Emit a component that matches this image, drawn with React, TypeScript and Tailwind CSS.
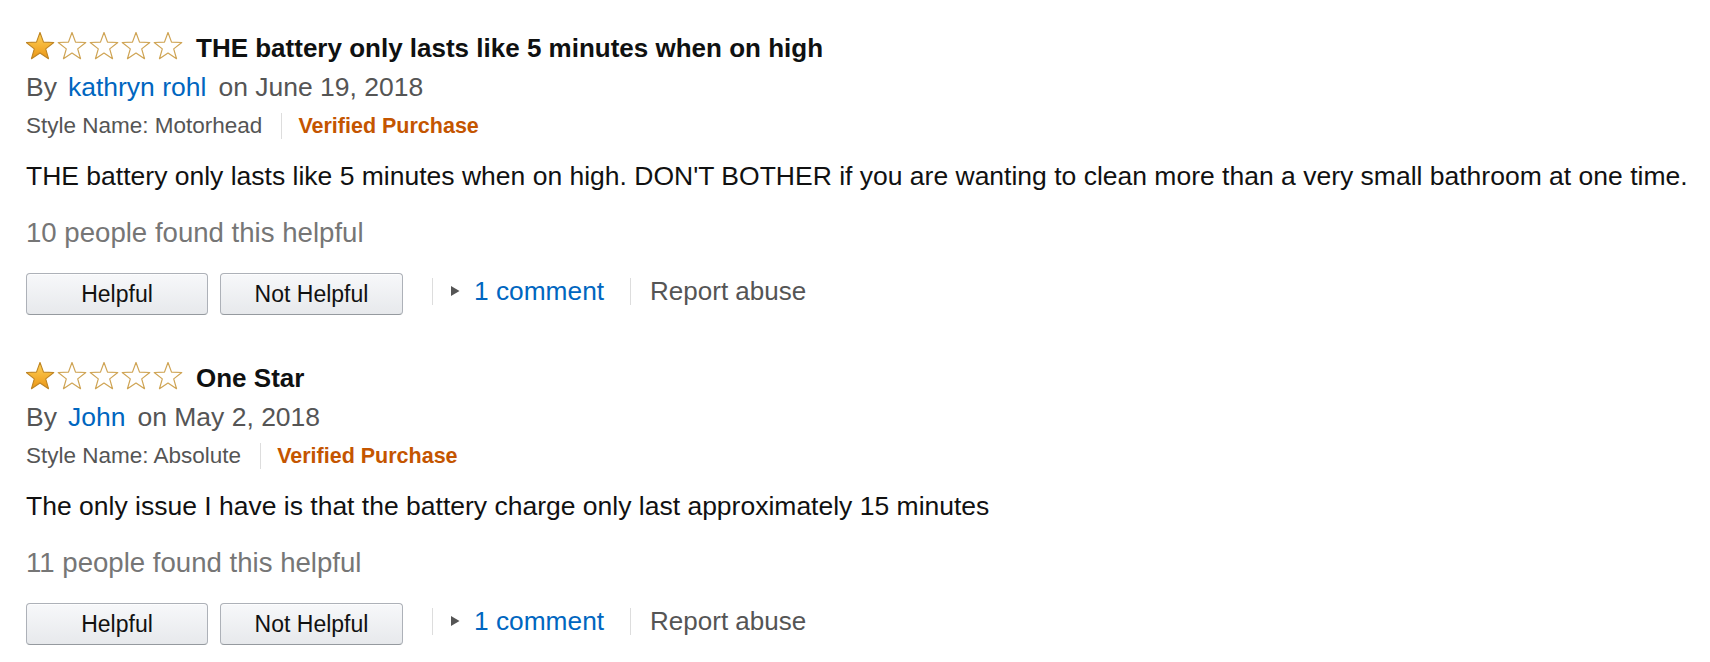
import React from "react";

const R = 14.5;
const r = 6.0;
function starPoints(): string {
  const pts: string[] = [];
  for (let k = 0; k < 10; k++) {
    const ang = ((-90 + k * 36) * Math.PI) / 180;
    const rad = k % 2 === 0 ? R : r;
    pts.push(`${(rad * Math.cos(ang)).toFixed(3)},${(rad * Math.sin(ang)).toFixed(3)}`);
  }
  return pts.join(" ");
}
const STAR = starPoints();

function Stars({ filled }: { filled: number }) {
  return (
    <svg width="158" height="28" viewBox="0 0 158 28" className="shrink-0 self-start">
      <defs>
        <linearGradient id="starfill" x1="0" y1="0" x2="0" y2="1">
          <stop offset="0%" stopColor="#ffd35a" />
          <stop offset="100%" stopColor="#eb9615" />
        </linearGradient>
      </defs>
      {[0, 1, 2, 3, 4].map((i) => (
        <g key={i} transform={`translate(${14 + i * 32},15)`}>
          <polygon
            points={STAR}
            fill={i < filled ? "url(#starfill)" : "#ffffff"}
            stroke={i < filled ? "#bf8523" : "#cfa454"}
            strokeWidth={i < filled ? 1.1 : 1.2}
            strokeLinejoin="round"
          />
        </g>
      ))}
    </svg>
  );
}

type Review = {
  title: string;
  author: string;
  date: string;
  style: string;
  body: string;
  helpful: string;
};

const reviews: Review[] = [
  {
    title: "THE battery only lasts like 5 minutes when on high",
    author: "kathryn rohl",
    date: "on June 19, 2018",
    style: "Style Name: Motorhead",
    body:
      "THE battery only lasts like 5 minutes when on high. DON'T BOTHER if you are wanting to clean more than a very small bathroom at one time.",
    helpful: "10 people found this helpful",
  },
  {
    title: "One Star",
    author: "John",
    date: "on May 2, 2018",
    style: "Style Name: Absolute",
    body: "The only issue I have is that the battery charge only last approximately 15 minutes",
    helpful: "11 people found this helpful",
  },
];

function Button({ label, width }: { label: string; width: string }) {
  return (
    <button
      className={`${width} h-[42px] rounded-[4px] border border-[#adb1b8] border-b-[#959a9f] bg-gradient-to-b from-[#f7f8fa] to-[#e7e9ec] text-[23px] leading-[40px] text-[#111] shadow-[inset_0_1px_0_rgba(255,255,255,0.7)]`}
    >
      {label}
    </button>
  );
}

function ReviewBlock({ r, first }: { r: Review; first: boolean }) {
  return (
    <div className={`flex flex-col ${first ? "" : "mt-[47px]"}`}>
      <div className="flex h-[32px] items-center">
        <Stars filled={1} />
        <span className="ml-[12px] text-[26px] font-bold leading-[32px] text-[#0f1111]">{r.title}</span>
      </div>
      <div className="mt-[7px] flex h-[32px] items-center text-[26.5px] leading-[32px] text-[#555555]">
        <span>By</span>
        <span className="ml-[11px] text-[#0066c0]">{r.author}</span>
        <span className="ml-[12px]">{r.date}</span>
      </div>
      <div className="mt-[9px] flex h-[28px] items-center text-[22.5px] leading-[28px]">
        <span className="text-[#555555]">{r.style}</span>
        <span className="ml-[19px] mr-[16px] h-[26px] w-px bg-[#dddddd]" />
        <span className="text-[21.5px] font-bold text-[#c45500]">Verified Purchase</span>
      </div>
      <div className="mt-[20px] whitespace-nowrap text-[26.5px] leading-[32px] text-[#111111]">{r.body}</div>
      <div className="mt-[25px] text-[27.6px] leading-[32px] text-[#767676]">{r.helpful}</div>
      <div className="mt-[24px] flex h-[42px] items-center">
        <Button label="Helpful" width="w-[182px]" />
        <div className="ml-[12px]">
          <Button label="Not Helpful" width="w-[183px]" />
        </div>
        <div className="mb-[6px] ml-[29px] flex items-center">
          <span className="h-[27px] w-px bg-[#dddddd]" />
          <svg width="9" height="10" viewBox="0 0 9 10" className="ml-[18px]">
            <polygon points="0,0 8.5,5 0,10" fill="#555555" />
          </svg>
          <span className="ml-[14px] text-[26.3px] leading-[32px] text-[#0066c0]">1 comment</span>
          <span className="ml-[26px] h-[27px] w-px bg-[#dddddd]" />
          <span className="ml-[19px] text-[26px] leading-[32px] text-[#555555]">Report abuse</span>
        </div>
      </div>
    </div>
  );
}

export default function App() {
  return (
    <div
      className="min-h-[662px] w-[1710px] bg-white pl-[26px] pt-[32px]"
      style={{ fontFamily: '"Liberation Sans", Arial, sans-serif' }}
    >
      {reviews.map((r, i) => (
        <ReviewBlock key={i} r={r} first={i === 0} />
      ))}
    </div>
  );
}
